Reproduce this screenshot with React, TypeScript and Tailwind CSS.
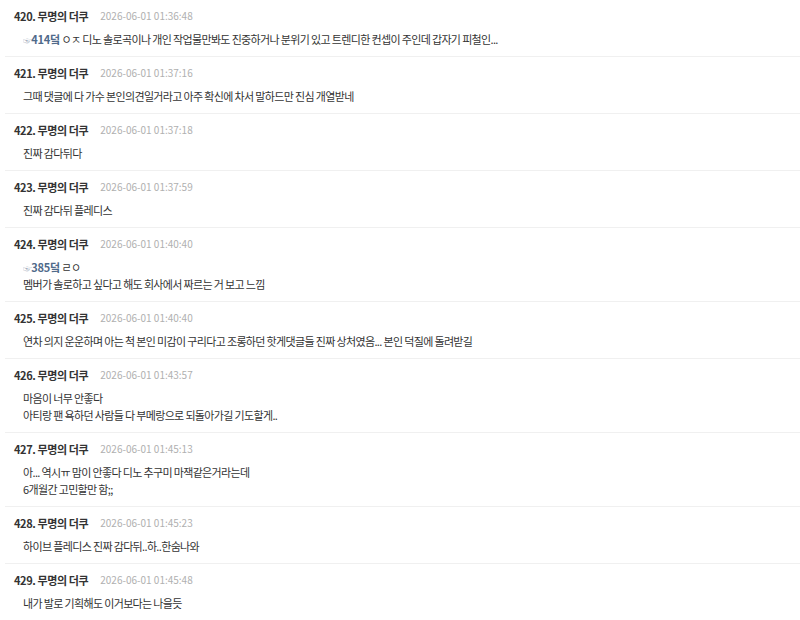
import React from 'react';

type Comment = {
  no: number;
  date: string;
  reply?: { to: string; rest: string };
  lines: string[];
};

const comments: Comment[] = [
  { no: 420, date: '2026-06-01 01:36:48', reply: { to: '414덬', rest: 'ㅇㅈ 디노 솔로곡이나 개인 작업물만봐도 진중하거나 분위기 있고 트렌디한 컨셉이 주인데 갑자기 피철인...' }, lines: [] },
  { no: 421, date: '2026-06-01 01:37:16', lines: ['그때 댓글에 다 가수 본인의견일거라고 아주 확신에 차서 말하드만 진심 개열받네'] },
  { no: 422, date: '2026-06-01 01:37:18', lines: ['진짜 감다뒤다'] },
  { no: 423, date: '2026-06-01 01:37:59', lines: ['진짜 감다뒤 플레디스'] },
  { no: 424, date: '2026-06-01 01:40:40', reply: { to: '385덬', rest: 'ㄹㅇ' }, lines: ['멤버가 솔로하고 싶다고 해도 회사에서 짜르는 거 보고 느낌'] },
  { no: 425, date: '2026-06-01 01:40:40', lines: ['연차 의지 운운하며 아는 척 본인 미감이 구리다고 조롱하던 핫게댓글들 진짜 상처였음... 본인 덕질에 돌려받길'] },
  { no: 426, date: '2026-06-01 01:43:57', lines: ['마음이 너무 안좋다', '아티랑 팬 욕하던 사람들 다 부메랑으로 되돌아가길 기도할게..'] },
  { no: 427, date: '2026-06-01 01:45:13', lines: ['아... 역시ㅠ 맘이 안좋다 디노 추구미 마잭같은거라는데', '6개월간 고민할만 함;;'] },
  { no: 428, date: '2026-06-01 01:45:23', lines: ['하이브 플레디스 진짜 감다뒤..하..한숨나와'] },
  { no: 429, date: '2026-06-01 01:45:48', lines: ['내가 발로 기획해도 이거보다는 나을듯'] },
];

const font = { fontFamily: '"Noto Sans CJK KR", "Noto Sans", sans-serif' };

function CommentRow({ c }: { c: Comment }) {
  return (
    <div className="ml-[5px] border-b border-[#f0f0f0] pt-2 pb-2">
      <div className="flex items-center h-4 pl-[9px]">
        <span className="text-[11px] leading-4 font-bold tracking-[-0.4px] text-[#333]">{c.no}. 무명의 더쿠</span>
        <span className="ml-[12px] text-[10px] leading-4 text-[#b0b0b0]">{c.date}</span>
      </div>
      <div className="mt-[7px] pl-[18px] text-[11px] leading-[17px] tracking-[-0.65px] text-[#333]">
        {c.reply && (
          <div className="h-[17px] overflow-hidden">
            <span className="text-[9px] leading-none text-[#9aa8b8]">☞</span>
            <span className="font-bold leading-none text-[#4f6a8a] text-[11px] tracking-[-0.3px]">{c.reply.to}</span>{' '}
            {c.reply.rest}
          </div>
        )}
        {c.lines.map((l, i) => (
          <div key={i}>{l}</div>
        ))}
      </div>
    </div>
  );
}

export default function App() {
  return (
    <div className="w-[800px] h-[620px] overflow-hidden bg-white" style={font}>
      {comments.map((c) => (
        <CommentRow key={c.no} c={c} />
      ))}
    </div>
  );
}
